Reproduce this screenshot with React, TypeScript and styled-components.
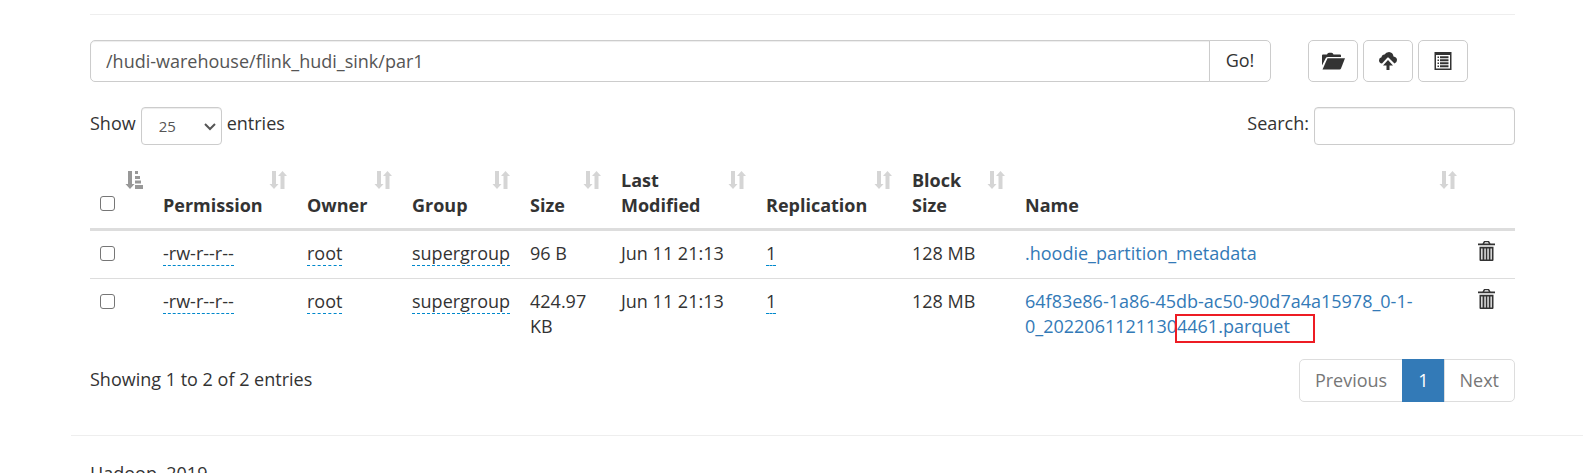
import React from "react";
import styled, { createGlobalStyle, css } from "styled-components";

const GlobalStyle = createGlobalStyle`
  *, *::before, *::after { box-sizing: border-box; }
  body {
    margin: 0;
    background: #fff;
    color: #333;
    font-family: "Open Sans", "Noto Sans", sans-serif;
    font-size: 18px;
    line-height: 25px;
    overflow-x: hidden;
  }
  input, button, select { font-family: inherit; }
`;

const Container = styled.main`
  padding: 14px 68px 0 90px;
`;

const Rule = styled.hr`
  margin: 0;
  border: 0;
  border-top: 1px solid #eee;
`;

const Toolbar = styled.div`
  display: flex;
  gap: 37px;
  padding: 25px 47px 0 0;
`;

const PathForm = styled.form`
  display: flex;
  flex: 1;
`;

const field = css`
  border: 1px solid #ccc;
  background: #fff;
  color: #555;
  box-shadow: inset 0 1px 1px rgba(0, 0, 0, 0.075);
`;

const PathInput = styled.input`
  ${field}
  flex: 1;
  min-width: 0;
  height: 42px;
  padding: 0 15px;
  border-radius: 5px 0 0 5px;
  font-size: 18px;
`;

const Button = styled.button`
  display: inline-flex;
  align-items: center;
  justify-content: center;
  height: 42px;
  padding: 0 14px 2px;
  border: 1px solid #ccc;
  border-radius: 5px;
  background: #fff;
  color: #333;
  font-size: 18px;
`;

const GoButton = styled(Button)`
  width: 62px;
  margin-left: -1px;
  border-radius: 0 5px 5px 0;
`;

const IconButton = styled(Button)`
  width: 50px;
  padding: 0;
`;

const Actions = styled.div`
  display: flex;
  gap: 5px;
`;

const Controls = styled.div`
  display: flex;
  justify-content: space-between;
  padding-top: 25px;
`;

const ControlLabel = styled.label`
  display: flex;
  gap: 5px;
  line-height: 32px;
`;

const SelectBox = styled.span`
  position: relative;
  display: flex;
`;

const LengthSelect = styled.select`
  ${field}
  appearance: none;
  width: 81px;
  height: 38px;
  padding: 0 17px;
  border-radius: 4px;
  font-size: 15px;
`;

const Chevron = styled.svg`
  position: absolute;
  top: 16px;
  right: 5px;
  width: 14px;
  height: 8px;
  fill: none;
  stroke: #555;
  stroke-width: 2;
  pointer-events: none;
`;

const SearchInput = styled.input`
  ${field}
  width: 201px;
  height: 38px;
  padding: 0 12px;
  border-radius: 4px;
  font-size: 15px;
`;

const Table = styled.table`
  width: 100%;
  margin-top: 13px;
  border-collapse: separate;
  border-spacing: 0;
  table-layout: fixed;
`;

const Col = styled.col<{ $width?: number }>`
  width: ${(p) => (p.$width ? `${p.$width}px` : "auto")};
`;

const HeadCell = styled.th`
  position: relative;
  padding: 10px 37px 10px 10px;
  border-bottom: 3px solid #ddd;
  text-align: left;
  vertical-align: bottom;
  font-weight: 700;
`;

const SortMark = styled.svg<{ $active?: boolean }>`
  position: absolute;
  top: 13px;
  right: 10px;
  width: 18px;
  height: 18px;
  fill: #333;
  opacity: ${(p) => (p.$active ? 0.5 : 0.2)};
`;

const Cell = styled.td`
  height: 47px;
  padding: 10px;
  vertical-align: top;
  tr + tr > & { border-top: 1px solid #ddd; }
`;

const Check = styled.input`
  appearance: none;
  display: block;
  width: 15px;
  height: 15px;
  margin: 5px 0 7px;
  border: 1px solid #767676;
  border-radius: 3px;
  background: #fff;
`;

const Editable = styled.span`
  border-bottom: 1px dashed #0088cc;
`;

const FileLink = styled.a`
  color: #337ab7;
  text-decoration: none;
`;

const Marked = styled.span`
  position: relative;
  &::after {
    content: "";
    position: absolute;
    inset: 0 -25px -5px -2px;
    border: 2px solid #ed1c24;
  }
`;

const TrashButton = styled.button`
  display: block;
  margin-left: 1px;
  padding: 0;
  border: 0;
  background: none;
  color: #333;
`;

const Icon = styled.svg`
  display: block;
  fill: currentColor;
`;

const TableFooter = styled.div`
  display: flex;
  justify-content: space-between;
  padding: 10px 0 33px;
`;

const Info = styled.div`
  padding-top: 8px;
`;

const Pager = styled.nav`
  display: flex;
`;

const PageLink = styled.a<{ $active?: boolean }>`
  height: 43px;
  padding: 8px 15px;
  margin-left: -1px;
  border: 1px solid ${(p) => (p.$active ? "#337ab7" : "#ddd")};
  background: ${(p) => (p.$active ? "#337ab7" : "#fff")};
  color: ${(p) => (p.$active ? "#fff" : "#777")};
  text-decoration: none;
  &:first-child { border-radius: 5px 0 0 5px; }
  &:last-child { border-radius: 0 5px 5px 0; }
`;

const Footer = styled.footer`
  margin-left: 71px;
`;

const FooterText = styled.p`
  margin: 0;
  padding: 25px 19px 0;
`;

const SortIcon = ({ active }: { active?: boolean }) => (
  <SortMark viewBox="0 0 18 18" $active={active} aria-hidden="true">
    <path d="M3 0h4v13h2.5L5 18 .5 13H3z" />
    {active ? (
      <path d="M10 0h3v3h-3zM10 5h5v3h-5zM10 9.500h6v3h-6zM10 14h8v4h-8z" />
    ) : (
      <path d="M13.500 0L18 5h-2.500v13h-4V5H9z" />
    )}
  </SortMark>
);

const FolderOpen = () => (
  <Icon width="24" height="18" viewBox="0 0 24 18" aria-hidden="true">
    <path d="M1 13.500V3.500Q1 2.500 2 2.500H6Q6.500 .8 8 .8h2.500Q12 .8 12.500 2.500h6.500q1 0 1 1V5H7Q5.300 5 4.700 6.300z" />
    <path d="M6.500 6.300H24l-4 10.200q-.4 1-1.400 1H1.500z" />
  </Icon>
);

const CloudUpload = () => (
  <Icon width="20" height="20" viewBox="0 0 20 20" aria-hidden="true">
    <path d="M4 12.500Q1 12 1 9.200 1 6.800 3.500 6.300 4 3.500 6.500 3.500 8 1 11 1q4 .3 4.500 4.500Q19 6 19 9 19 11.500 16.500 12.500L10.500 6.500 9.500 6.500 4 12.500z" />
    <path d="M10 9l5 5.500h-3.500V19h-3v-4.500H5z" />
  </Icon>
);

const ListAlt = () => (
  <Icon width="18" height="18" viewBox="0 0 18 18" aria-hidden="true">
    <path
      fillRule="evenodd"
      d="M.5 0h17v18H.5zM2 3v13.500h14V3zM3.500 4.500H5V6H3.500zM6 4.300h8.500V6.200H6zM3.500 7.500H5V9H3.500zM6 7.300h8.500V9.200H6zM3.500 10.500H5V12H3.500zM6 10.300h8.500V12.200H6zM3.500 13.500H5V15H3.500zM6 13.300h8.500V15.200H6z"
    />
  </Icon>
);

const Trash = () => (
  <Icon width="17" height="20" viewBox="0 1 17 20" aria-hidden="true">
    <path
      fillRule="evenodd"
      d="M0 3.500h4.500L6 1h5l1.500 2.500H17V5.200H0zM6.200 3.500h4.600L10 2.300H7zM1.500 6.700h14V20q0 1-1 1h-12q-1 0-1-1zM3.200 8.500v11h1.300v-11zM6.400 8.500v11h1.300v-11zM9.400 8.500v11h1.300v-11zM12.500 8.500v11h1.300v-11z"
    />
  </Icon>
);

const columns: { label: string; width?: number }[] = [
  { label: "Permission", width: 144 },
  { label: "Owner", width: 105 },
  { label: "Group", width: 118 },
  { label: "Size", width: 91 },
  { label: "Last Modified", width: 145 },
  { label: "Replication", width: 146 },
  { label: "Block Size", width: 113 },
  { label: "Name" },
];

const files: { key: string; size: string; name: React.ReactNode }[] = [
  { key: "metadata", size: "96 B", name: ".hoodie_partition_metadata" },
  {
    key: "parquet",
    size: "424.97 KB",
    name: (
      <>
        64f83e86-1a86-45db-ac50-90d7a4a15978_0-1-
        <wbr />
        0_2022061121130<Marked>4461.parquet</Marked>
      </>
    ),
  },
];

export default function App() {
  return (
    <>
      <GlobalStyle />
      <Container>
        <Rule />
        <Toolbar>
          <PathForm onSubmit={(e) => e.preventDefault()}>
            <PathInput aria-label="Directory" defaultValue="/hudi-warehouse/flink_hudi_sink/par1" />
            <GoButton type="submit">Go!</GoButton>
          </PathForm>
          <Actions>
            <IconButton type="button" aria-label="Create directory"><FolderOpen /></IconButton>
            <IconButton type="button" aria-label="Upload files"><CloudUpload /></IconButton>
            <IconButton type="button" aria-label="Cut and paste"><ListAlt /></IconButton>
          </Actions>
        </Toolbar>
        <Controls>
          <ControlLabel>
            Show
            <SelectBox>
              <LengthSelect defaultValue="25">
                <option>25</option>
                <option>50</option>
                <option>100</option>
              </LengthSelect>
              <Chevron viewBox="0 0 14 8" aria-hidden="true">
                <path d="M2 1l5 5 5-5" />
              </Chevron>
            </SelectBox>
            entries
          </ControlLabel>
          <ControlLabel>
            Search:
            <SearchInput type="search" />
          </ControlLabel>
        </Controls>
        <Table>
          <colgroup>
            <Col $width={63} />
            {columns.map((c) => <Col key={c.label} $width={c.width} />)}
            <Col $width={48} />
          </colgroup>
          <thead>
            <tr>
              <HeadCell>
                <Check type="checkbox" aria-label="Select all" />
                <SortIcon active />
              </HeadCell>
              {columns.map((c) => (
                <HeadCell key={c.label}>
                  {c.label}
                  <SortIcon />
                </HeadCell>
              ))}
              <HeadCell />
            </tr>
          </thead>
          <tbody>
            {files.map((f) => (
              <tr key={f.key}>
                <Cell><Check type="checkbox" aria-label="Select file" /></Cell>
                <Cell><Editable>-rw-r--r--</Editable></Cell>
                <Cell><Editable>root</Editable></Cell>
                <Cell><Editable>supergroup</Editable></Cell>
                <Cell>{f.size}</Cell>
                <Cell>Jun 11 21:13</Cell>
                <Cell><Editable>1</Editable></Cell>
                <Cell>128 MB</Cell>
                <Cell><FileLink href="#">{f.name}</FileLink></Cell>
                <Cell><TrashButton type="button" aria-label="Delete"><Trash /></TrashButton></Cell>
              </tr>
            ))}
          </tbody>
        </Table>
        <TableFooter>
          <Info>Showing 1 to 2 of 2 entries</Info>
          <Pager>
            <PageLink href="#">Previous</PageLink>
            <PageLink href="#" $active>1</PageLink>
            <PageLink href="#">Next</PageLink>
          </Pager>
        </TableFooter>
      </Container>
      <Footer>
        <Rule />
        <FooterText>Hadoop, 2019.</FooterText>
      </Footer>
    </>
  );
}
